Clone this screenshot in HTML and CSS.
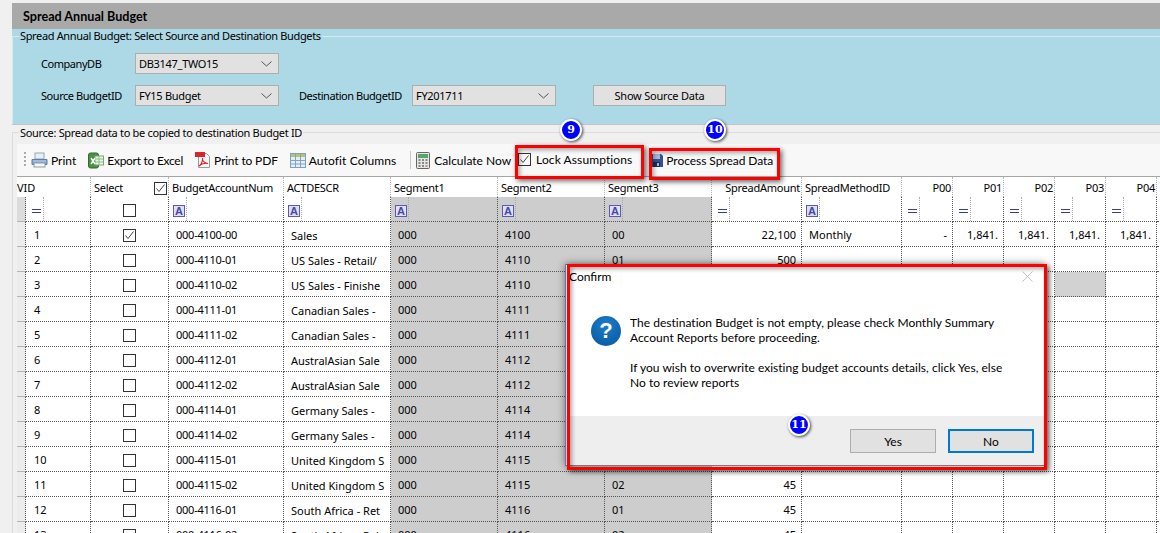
FILE: index.html
```html
<!DOCTYPE html>
<html lang="en">
<head>
<meta charset="utf-8">
<title>Spread Annual Budget</title>
<link rel="stylesheet" href="styles.css">
</head>
<body>
<main class="app">
  <h1 class="title">Spread Annual Budget</h1>
  <section class="blue">
    <fieldset class="group">
      <legend>Spread Annual Budget: Select Source and Destination Budgets</legend>
      <div class="form-row">
        <label class="lbl">CompanyDB</label>
        <div class="combo"><span>DB3147_TWO15</span><svg width="11" height="6" viewBox="0 0 11 6"><path d="M.5.5l5 4.5 5-4.5" fill="none" stroke="#555"/></svg></div>
      </div>
      <div class="form-row">
        <label class="lbl">Source BudgetID</label>
        <div class="combo"><span>FY15 Budget</span><svg width="11" height="6" viewBox="0 0 11 6"><path d="M.5.5l5 4.5 5-4.5" fill="none" stroke="#555"/></svg></div>
        <label class="lbl lbl-dest">Destination BudgetID</label>
        <div class="combo"><span>FY201711</span><svg width="11" height="6" viewBox="0 0 11 6"><path d="M.5.5l5 4.5 5-4.5" fill="none" stroke="#555"/></svg></div>
        <button class="btn btn-show">Show Source Data</button>
      </div>
    </fieldset>
  </section>
  <fieldset class="group group-data">
    <legend>Source: Spread data to be copied to destination Budget ID</legend>
    <div class="toolbar">
      <span class="grip"></span>
      <span class="tool tool-print"><svg width="17" height="16" viewBox="0 0 17 16"><rect x="4" y="1" width="9" height="6" fill="#e8eef4" stroke="#8fa6bd"/><path d="M1 7.5h15v5H1z" fill="#7fa8d0" stroke="#5b7fa6"/><rect x="3" y="11" width="11" height="4" fill="#f4f6f8" stroke="#8a9aaa"/><path d="M2 9h13" stroke="#b9d2ea"/></svg>Print</span>
      <span class="tool tool-excel"><svg width="16" height="17" viewBox="0 0 16 17"><rect x=".5" y="1" width="10" height="15" rx="2" fill="#4d8f46" stroke="#2f6b2c"/><rect x="7" y="4" width="8.500" height="9" fill="#eef5ea" stroke="#7aa873"/><path d="M7 7h8M7 10h8M11 4v9" stroke="#8fbc88"/><path d="M3 6l4 6M7 6l-4 6" stroke="#fff" stroke-width="1.500"/></svg>Export to Excel</span>
      <span class="tool tool-pdf"><svg width="16" height="17" viewBox="0 0 16 17"><path d="M3.500 1.500h8l3 3v11h-11z" fill="#f6f6f6" stroke="#9a9a9a"/><rect x="0" y="0" width="10" height="5" fill="#d8242a"/><path d="M4 14c2-1 4-5 3.500-8C7 9 9 11 13 11.500 10 11 6 12 4 14z" fill="none" stroke="#d8242a" stroke-width="1.100"/></svg>Print to PDF</span>
      <span class="tool tool-fit"><svg width="16" height="15" viewBox="0 0 16 15"><rect x=".5" y=".5" width="15" height="14" fill="#e4eef8" stroke="#7f9fbf"/><rect x="1" y="1" width="14" height="3" fill="#b8c46a"/><path d="M1 7.500h14M1 11h14M5.500 1v13M10.500 1v13" stroke="#7fa3c8"/></svg>Autofit Columns</span>
      <span class="sep"></span>
      <span class="tool tool-calc"><svg width="14" height="17" viewBox="0 0 14 17"><rect x=".5" y=".5" width="13" height="16" rx="1" fill="#e6e6e6" stroke="#666"/><rect x="2" y="2" width="10" height="4" fill="#5aa469"/><path d="M2.500 8h2M6 8h2M9.500 8h2M2.500 11h2M6 11h2M9.500 11h2M2.500 14h2M6 14h2" stroke="#6a6a6a" stroke-width="1.600"/><path d="M9.500 14h2" stroke="#d0703a" stroke-width="1.600"/></svg>Calculate Now</span>
      <span class="tool tool-lock"><span class="check checked"><svg width="11" height="11" viewBox="0 0 11 11"><path d="M1.500 5.500l2.500 3 5.500-7" fill="none" stroke="#444"/></svg></span>Lock Assumptions</span>
      <span class="tool tool-save"><svg width="13" height="14" viewBox="0 0 13 14"><path d="M0 1h11l2 2v11H0z" fill="#36508f"/><rect x="3" y="1" width="7" height="5" fill="#a9b7d8"/><rect x="3" y="9" width="7" height="5" fill="#1c2a55"/><rect x="7" y="10" width="2" height="3" fill="#a9b7d8"/></svg>Process Spread Data</span>
    </div>
    <table class="grid">
      <colgroup><col class="w-gut"><col class="w-vid"><col class="w-sel"><col class="w-acc"><col class="w-act"><col class="w-seg"><col class="w-seg"><col class="w-seg"><col class="w-amt"><col class="w-met"><col class="w-p"><col class="w-p"><col class="w-p"><col class="w-p"><col class="w-p"><col class="w-end"></colgroup>
      <thead>
        <tr class="head">
          <th colspan="2" class="th-vid">VID</th>
          <th class="th-sel"><span>Select</span><span class="check checked"><svg width="11" height="11" viewBox="0 0 11 11"><path d="M1.500 5.500l2.500 3 5.500-7" fill="none" stroke="#444"/></svg></span></th>
          <th>BudgetAccountNum</th><th>ACTDESCR</th><th>Segment1</th><th>Segment2</th><th>Segment3</th>
          <th class="r">SpreadAmount</th><th>SpreadMethodID</th>
          <th class="r">P00</th><th class="r">P01</th><th class="r">P02</th><th class="r">P03</th><th class="r">P04</th><th></th>
        </tr>
        <tr class="filter">
          <td class="gut"></td>
          <td><span class="op"><i class="eq"></i></span></td>
          <td class="mid"><span class="check"></span></td>
          <td><span class="op"><b class="abc">A</b></span></td>
          <td><span class="op"><b class="abc">A</b></span></td>
          <td><span class="op"><b class="abc">A</b></span></td>
          <td><span class="op"><b class="abc">A</b></span></td>
          <td><span class="op"><b class="abc">A</b></span></td>
          <td><span class="op"><i class="eq"></i></span></td>
          <td><span class="op"><b class="abc">A</b></span></td>
          <td><span class="op"><i class="eq"></i></span></td>
          <td><span class="op"><i class="eq"></i></span></td>
          <td><span class="op"><i class="eq"></i></span></td>
          <td><span class="op"><i class="eq"></i></span></td>
          <td><span class="op"><i class="eq"></i></span></td>
          <td></td>
        </tr>
      </thead>
      <tbody>
        <tr><td class="gut"></td><td>1</td><td class="mid"><span class="check checked"><svg width="11" height="11" viewBox="0 0 11 11"><path d="M1.500 5.500l2.500 3 5.500-7" fill="none" stroke="#444"/></svg></span></td><td class="acc">000-4100-00</td><td class="desc">Sales</td><td>000</td><td>4100</td><td>00</td><td class="r">22,100</td><td>Monthly</td><td class="r">-</td><td class="r">1,841.</td><td class="r">1,841.</td><td class="r">1,841.</td><td class="r">1,841.</td><td></td></tr>
        <tr><td class="gut"></td><td>2</td><td class="mid"><span class="check"></span></td><td class="acc">000-4110-01</td><td class="desc">US Sales - Retail/</td><td>000</td><td>4110</td><td>01</td><td class="r">500</td><td></td><td></td><td></td><td></td><td></td><td></td><td></td></tr>
        <tr><td class="gut"></td><td>3</td><td class="mid"><span class="check"></span></td><td class="acc">000-4110-02</td><td class="desc">US Sales - Finishe</td><td>000</td><td>4110</td><td></td><td></td><td></td><td></td><td></td><td></td><td class="hl"></td><td></td><td></td></tr>
        <tr><td class="gut"></td><td>4</td><td class="mid"><span class="check"></span></td><td class="acc">000-4111-01</td><td class="desc">Canadian Sales -</td><td>000</td><td>4111</td><td></td><td></td><td></td><td></td><td></td><td></td><td></td><td></td><td></td></tr>
        <tr><td class="gut"></td><td>5</td><td class="mid"><span class="check"></span></td><td class="acc">000-4111-02</td><td class="desc">Canadian Sales -</td><td>000</td><td>4111</td><td></td><td></td><td></td><td></td><td></td><td></td><td></td><td></td><td></td></tr>
        <tr><td class="gut"></td><td>6</td><td class="mid"><span class="check"></span></td><td class="acc">000-4112-01</td><td class="desc">AustralAsian Sale</td><td>000</td><td>4112</td><td></td><td></td><td></td><td></td><td></td><td></td><td></td><td></td><td></td></tr>
        <tr><td class="gut"></td><td>7</td><td class="mid"><span class="check"></span></td><td class="acc">000-4112-02</td><td class="desc">AustralAsian Sale</td><td>000</td><td>4112</td><td></td><td></td><td></td><td></td><td></td><td></td><td></td><td></td><td></td></tr>
        <tr><td class="gut"></td><td>8</td><td class="mid"><span class="check"></span></td><td class="acc">000-4114-01</td><td class="desc">Germany Sales -</td><td>000</td><td>4114</td><td></td><td></td><td></td><td></td><td></td><td></td><td></td><td></td><td></td></tr>
        <tr><td class="gut"></td><td>9</td><td class="mid"><span class="check"></span></td><td class="acc">000-4114-02</td><td class="desc">Germany Sales -</td><td>000</td><td>4114</td><td></td><td></td><td></td><td></td><td></td><td></td><td></td><td></td><td></td></tr>
        <tr><td class="gut"></td><td>10</td><td class="mid"><span class="check"></span></td><td class="acc">000-4115-01</td><td class="desc">United Kingdom S</td><td>000</td><td>4115</td><td></td><td></td><td></td><td></td><td></td><td></td><td></td><td></td><td></td></tr>
        <tr><td class="gut"></td><td>11</td><td class="mid"><span class="check"></span></td><td class="acc">000-4115-02</td><td class="desc">United Kingdom S</td><td>000</td><td>4115</td><td>02</td><td class="r">45</td><td></td><td></td><td></td><td></td><td></td><td></td><td></td></tr>
        <tr><td class="gut"></td><td>12</td><td class="mid"><span class="check"></span></td><td class="acc">000-4116-01</td><td class="desc">South Africa - Ret</td><td>000</td><td>4116</td><td>01</td><td class="r">45</td><td></td><td></td><td></td><td></td><td></td><td></td><td></td></tr>
        <tr><td class="gut"></td><td>13</td><td class="mid"><span class="check"></span></td><td class="acc">000-4116-02</td><td class="desc">South Africa - Rel</td><td>000</td><td>4116</td><td>02</td><td class="r">45</td><td></td><td></td><td></td><td></td><td></td><td></td><td></td></tr>
      </tbody>
    </table>
  </fieldset>
</main>

<div class="dialog" role="dialog">
  <div class="dlg-title"><span>Confirm</span><svg width="11" height="11" viewBox="0 0 11 11"><path d="M.5.500l10 10M10.500.500l-10 10" stroke="#c4c4c4" fill="none"/></svg></div>
  <div class="dlg-body">
    <span class="q-icon">?</span>
    <p class="dlg-msg">The destination Budget is not empty, please check Monthly Summary<br>Account Reports before proceeding.<br><br>If you wish to overwrite existing budget accounts details, click Yes, else<br>No to review reports</p>
  </div>
  <div class="dlg-foot">
    <button class="btn dlg-btn">Yes</button>
    <button class="btn dlg-btn dlg-default">No</button>
  </div>
</div>

<div class="callout callout-lock"></div>
<div class="callout callout-process"></div>
<div class="callout callout-dialog"></div>
<div class="badge badge-9">9</div>
<div class="badge badge-10">10</div>
<div class="badge badge-11">11</div>
</body>
</html>
```
FILE: styles.css
```css
* { box-sizing: border-box; }
html, body { margin: 0; height: 533px; overflow: hidden; }
body {
  position: relative;
  background: #f0f0f0;
  font: 12px/15px Lato, "Noto Sans", sans-serif;
  color: #000;
}
.app {
  margin-left: 12px;
  padding-top: 3px;
  height: 533px;
  overflow: hidden;
}
.title {
  margin: 0;
  height: 26px;
  padding-left: 11px;
  background: #a9a9a9;
  font-size: 12.6px;
  line-height: 28px;
  font-weight: 700;
}
.blue {
  height: 96px;
  background: #add8e6;
  border-bottom: 1px solid #c4c4c4;
  font: 11px/15px "Noto Sans", sans-serif;
}
.group {
  margin: 0;
  padding: 0;
  min-width: 0;
  border: 0;
  border-top: 1px solid #dcdcdc;
  border-left: 1px solid #dcdcdc;
}
.group legend {
  margin-left: 6px;
  padding: 0 1px;
  font: 11px/14px "Noto Sans", sans-serif;
  letter-spacing: -.35px;
}
.blue .group { border-color: #d6e9ef; height: 95px; }
.form-row {
  display: flex;
  align-items: center;
  height: 21px;
  margin-top: 11px;
  padding-left: 28px;
  white-space: nowrap;
}
.blue .group .form-row:first-of-type { margin-top: 10px; }
.lbl { width: 94px; letter-spacing: -.45px; }
.lbl-dest { width: 113px; margin-left: 20px; }
.combo {
  display: flex;
  align-items: center;
  justify-content: space-between;
  width: 144px;
  height: 21px;
  padding: 0 6px 0 3px;
  background: #e1e1e1;
  border: 1px solid #adadad;
  letter-spacing: -.3px;
}
.btn {
  font: inherit;
  color: #000;
  background: #e1e1e1;
  border: 1px solid #adadad;
  padding: 0;
}
.btn-show { width: 133px; height: 21px; margin-left: 37px; letter-spacing: -.2px; }

.group-data { height: 408px; border-left-color: #dcdcdc; margin-top: 0; }
.group-data legend { line-height: 15px; letter-spacing: -.31px; }
.toolbar {
  display: flex;
  align-items: center;
  height: 33px;
  margin: 4px 0 0 4px;
  background: #f8f8f8;
  border-bottom: 1px solid #a6a6a6;
}
.grip {
  width: 2px;
  height: 16px;
  margin-left: 7px;
  background: repeating-linear-gradient(#aaa 0 2px, transparent 2px 4px);
}
.tool { display: flex; align-items: center; gap: 3px; white-space: nowrap; }
.tool-print { margin-left: 5px; }
.tool-excel { margin-left: 12px; letter-spacing: -.27px; }
.tool-pdf { margin-left: 12px; letter-spacing: -.15px; }
.tool-fit { margin-left: 12px; gap: 3px; letter-spacing: .1px; }
.sep { width: 1px; height: 18px; margin-left: 14px; background: #c8c8c8; }
.tool-calc { margin-left: 5px; gap: 4px; }
.tool-lock { margin-left: 7px; gap: 5px; margin-top: -2px; letter-spacing: .1px; }
.tool-save { margin-left: 18px; gap: 3px; letter-spacing: -.05px; }

.check {
  display: inline-flex;
  align-items: center;
  justify-content: center;
  width: 13px;
  height: 13px;
  background: #fff;
  border: 1px solid #333;
}
.tool .check { background: transparent; }

.grid {
  width: 1143px;
  margin-left: 4px;
  table-layout: fixed;
  border-collapse: separate;
  border-spacing: 0;
  background: #fff;
  font: 11px/15px "Noto Sans", sans-serif;
}
.w-gut { width: 9px; }
.w-vid { width: 65px; }
.w-sel { width: 78px; }
.w-acc { width: 115px; }
.w-act { width: 107px; }
.w-seg { width: 107px; }
.w-amt { width: 90px; }
.w-met { width: 100px; }
.w-p { width: 51px; }
.w-end { width: 6px; }
.grid th {
  height: 20px;
  padding: 0 1px 0 3px;
  font-weight: 400;
  text-align: left;
  white-space: nowrap;
  overflow: hidden;
  letter-spacing: -.25px;
  border-right: 1px dotted #b4b4b4;
}
.grid th.th-vid { padding: 0; letter-spacing: 0; }
.grid th.r { padding-right: 1px; text-align: right; }
.grid th.th-sel span:first-child { display: inline-block; width: 60px; padding-top: 1px; }
.grid th .check { vertical-align: -2px; }
.grid td {
  height: 25px;
  padding: 0 7px;
  white-space: nowrap;
  overflow: hidden;
  border-right: 1px dotted #555;
  border-bottom: 1px dotted #555;
}
.grid td.r { text-align: right; padding-right: 5px; }
.grid td.mid { text-align: center; padding: 0; vertical-align: middle; }
.grid td.mid .check { vertical-align: middle; }
.grid td.desc { padding-top: 2px; }
.grid td.acc { letter-spacing: -.25px; }
.grid tbody td:nth-child(2) { padding-left: 8px; }
.grid tbody td:nth-child(n+6):nth-child(-n+8),
.filter td:nth-child(n+6):nth-child(-n+8) { background: #cdcdcd; }
.grid td.hl { background: #d2d2d2; }
.grid td.gut {
  padding: 0;
  background: #ececec;
  border-right: 1px dotted #555;
  border-bottom: 1px solid #b4b4b4;
}
.filter td.gut { background: #dcdcdc; }
.filter td { padding: 0; vertical-align: top; }
.op {
  display: flex;
  align-items: center;
  width: 18px;
  height: 24px;
  padding: 2px 0 0 4px;
  border-right: 1px dotted #aaa;
}
.eq {
  display: block;
  width: 9px;
  height: 4px;
  margin: 1px 0 0 2px;
  border-top: 1px solid #3c3c8c;
  border-bottom: 1px solid #3c3c8c;
}
.abc {
  display: block;
  width: 12px;
  height: 12px;
  margin-top: 1px;
  background: #dfe0f4;
  border: 1px solid #5a5ab0;
  color: #4848a8;
  font: 700 11px/10px "Liberation Sans", sans-serif;
  text-align: center;
}

.dialog {
  position: absolute;
  left: 565px;
  top: 264px;
  width: 480px;
  height: 202px;
  display: flex;
  flex-direction: column;
  background: #fff;
  border: 1px solid #5f82c4;
  border-bottom-color: #6f8090;
  box-shadow: 0 0 8px rgba(0, 0, 0, .45);
}
.dlg-title {
  display: flex;
  justify-content: space-between;
  align-items: center;
  height: 22px;
  padding: 0 11px 0 3px;
}
.dlg-body {
  flex: 1;
  display: flex;
  padding: 28px 0 0 25px;
}
.q-icon {
  flex: none;
  width: 30px;
  height: 30px;
  margin-top: 1px;
  border-radius: 50%;
  background: radial-gradient(circle at 50% 30%, #1c7cc8, #08569e);
  color: #fff;
  font: 700 22px/30px "Liberation Sans", sans-serif;
  text-align: center;
}
.dlg-msg { margin: 0 0 0 9px; letter-spacing: .02px; }
.dlg-foot {
  display: flex;
  justify-content: flex-end;
  gap: 12px;
  height: 49px;
  padding: 13px 10px 0 0;
  background: #eee;
}
.dlg-btn { width: 86px; height: 24px; }
.dlg-default { border: 2px solid #0078d7; }

.callout {
  position: absolute;
  border: 3px solid #f00;
  box-shadow: 2px 2px 5px rgba(0, 0, 0, .6), inset 2px 2px 4px rgba(0, 0, 0, .35);
}
.callout-lock { left: 515px; top: 145px; width: 129px; height: 34px; }
.callout-process { left: 649px; top: 148px; width: 131px; height: 32px; }
.callout-dialog { left: 567px; top: 264px; width: 480px; height: 206px; }

.badge {
  position: absolute;
  width: 22px;
  height: 22px;
  border-radius: 50%;
  background: #00f;
  border: 2px solid #fff;
  box-shadow: 1px 1px 3px rgba(0, 0, 0, .7);
  color: #fff;
  font: 700 11px/18px "DejaVu Serif", serif;
  text-align: center;
}
.badge-9 { left: 560px; top: 119px; }
.badge-10 { left: 704px; top: 119px; }
.badge-11 { left: 788px; top: 414px; }
```
